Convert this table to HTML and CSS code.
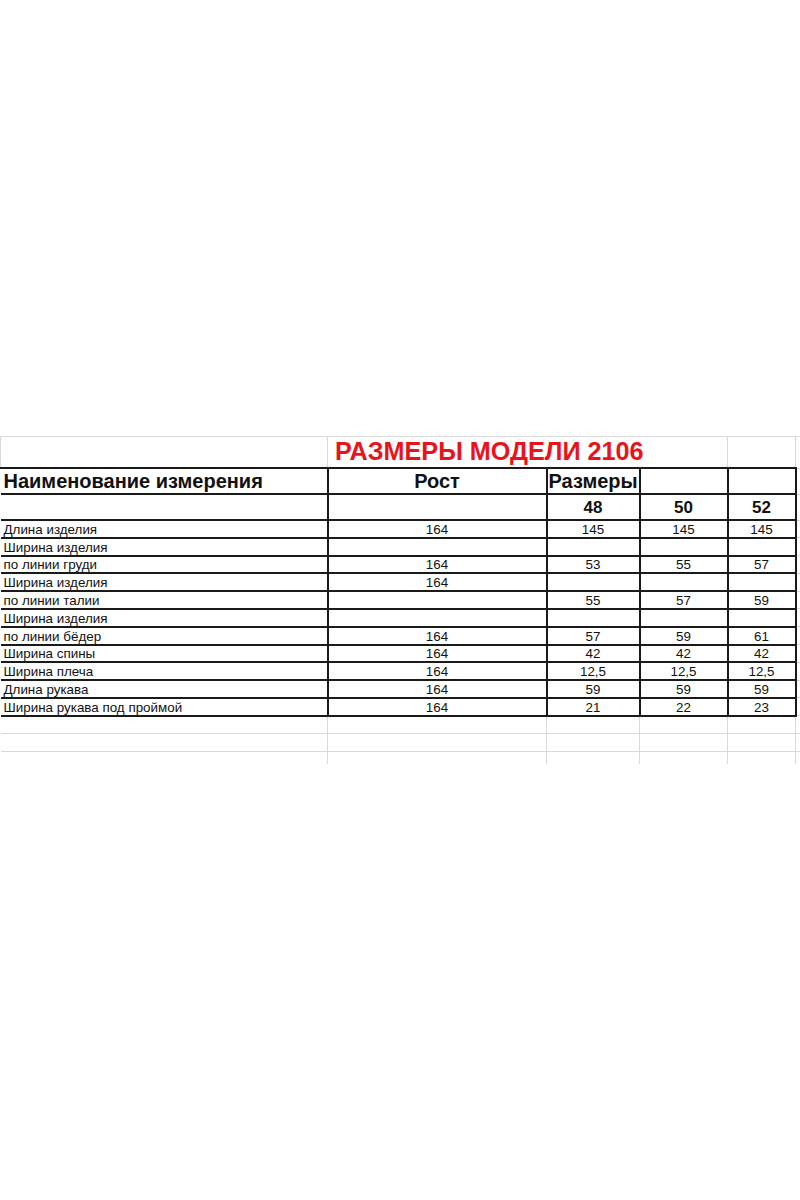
FILE: index.html
```html
<!DOCTYPE html>
<html lang="ru">
<head>
<meta charset="utf-8">
<title>Размеры модели 2106</title>
<link rel="stylesheet" href="styles.css">
</head>
<body>
<div class="sheet">
<table class="grid">
  <colgroup>
    <col class="c-name">
    <col class="c-rost">
    <col class="c-s1">
    <col class="c-s2">
    <col class="c-s3">
    <col class="c-rest">
  </colgroup>
  <tr class="r-title">
    <td class="g"></td>
    <td class="g title" colspan="3">РАЗМЕРЫ МОДЕЛИ 2106</td>
    <td class="g"></td>
    <td class="g"></td>
  </tr>
  <tr class="r-head">
    <td class="b first head-name">Наименование измерения</td>
    <td class="b head-c">Рост</td>
    <td class="b head-l">Размеры</td>
    <td class="b"></td>
    <td class="b"></td>
    <td class="g"></td>
  </tr>
  <tr class="r-head">
    <td class="b first"></td>
    <td class="b"></td>
    <td class="b size">48</td>
    <td class="b size">50</td>
    <td class="b size">52</td>
    <td class="g"></td>
  </tr>
  <tr class="r-data"><td class="b first name">Длина изделия</td><td class="b num">164</td><td class="b num">145</td><td class="b num">145</td><td class="b num">145</td><td class="g"></td></tr>
  <tr class="r-data"><td class="b first name">Ширина изделия</td><td class="b num"></td><td class="b num"></td><td class="b num"></td><td class="b num"></td><td class="g"></td></tr>
  <tr class="r-data"><td class="b first name">по линии груди</td><td class="b num">164</td><td class="b num">53</td><td class="b num">55</td><td class="b num">57</td><td class="g"></td></tr>
  <tr class="r-data"><td class="b first name">Ширина изделия</td><td class="b num">164</td><td class="b num"></td><td class="b num"></td><td class="b num"></td><td class="g"></td></tr>
  <tr class="r-data"><td class="b first name">по линии талии</td><td class="b num"></td><td class="b num">55</td><td class="b num">57</td><td class="b num">59</td><td class="g"></td></tr>
  <tr class="r-data"><td class="b first name">Ширина изделия</td><td class="b num"></td><td class="b num"></td><td class="b num"></td><td class="b num"></td><td class="g"></td></tr>
  <tr class="r-data"><td class="b first name">по линии бёдер</td><td class="b num">164</td><td class="b num">57</td><td class="b num">59</td><td class="b num">61</td><td class="g"></td></tr>
  <tr class="r-data"><td class="b first name">Ширина спины</td><td class="b num">164</td><td class="b num">42</td><td class="b num">42</td><td class="b num">42</td><td class="g"></td></tr>
  <tr class="r-data"><td class="b first name">Ширина плеча</td><td class="b num">164</td><td class="b num">12,5</td><td class="b num">12,5</td><td class="b num">12,5</td><td class="g"></td></tr>
  <tr class="r-data"><td class="b first name">Длина рукава</td><td class="b num">164</td><td class="b num">59</td><td class="b num">59</td><td class="b num">59</td><td class="g"></td></tr>
  <tr class="r-data"><td class="b first name">Ширина рукава под проймой</td><td class="b num">164</td><td class="b num">21</td><td class="b num">22</td><td class="b num">23</td><td class="g"></td></tr>
  <tr class="r-data"><td class="g first"></td><td class="g"></td><td class="g"></td><td class="g"></td><td class="g"></td><td class="g"></td></tr>
  <tr class="r-data"><td class="g first"></td><td class="g"></td><td class="g"></td><td class="g"></td><td class="g"></td><td class="g"></td></tr>
  <tr class="r-last"><td class="g first"></td><td class="g"></td><td class="g"></td><td class="g"></td><td class="g"></td><td class="g"></td></tr>
</table>
</div>
</body>
</html>
```

FILE: styles.css
```css
html, body {
  margin: 0;
  padding: 0;
  background: #ffffff;
}

body {
  font-family: "Liberation Sans", Arial, sans-serif;
  color: #111111;
  width: 800px;
  height: 1200px;
  overflow: hidden;
}

.sheet {
  padding-top: 436px;
}

.grid {
  border-collapse: collapse;
  table-layout: fixed;
  width: 800px;
}

.c-name { width: 327px; }
.c-rost { width: 219px; }
.c-s1 { width: 93px; }
.c-s2 { width: 88px; }
.c-s3 { width: 68px; }
.c-rest { width: 5px; }

.grid td {
  padding: 0;
  white-space: nowrap;
  overflow: visible;
  vertical-align: bottom;
}

.grid td.g {
  border: 1px solid #d9d9d9;
}

.grid td.b {
  border: 2px solid #1a1a1a;
}

.grid td.first {
  border-left: none;
}

.r-title { height: 31px; }
.r-head { height: 26px; }
.r-data { height: 17.8px; }
.r-last { height: 13px; }

.r-last td {
  border-bottom: none !important;
}

.r-last td.g:last-child,
.r-title td.g:last-child {
  border-right: none;
}

.title {
  color: #e8141a;
  font-weight: bold;
  font-size: 25.2px;
  line-height: 28px;
  padding-left: 7px !important;
  padding-bottom: 2px !important;
}

.head-name {
  font-weight: bold;
  font-size: 20px;
  line-height: 22px;
  padding-left: 3px !important;
  padding-bottom: 1px !important;
}

.head-c {
  font-weight: bold;
  font-size: 20px;
  line-height: 22px;
  text-align: center;
  padding-bottom: 1px !important;
}

.head-l {
  font-weight: bold;
  font-size: 20px;
  line-height: 22px;
  padding-left: 1px !important;
  padding-bottom: 1px !important;
}

.size {
  font-weight: bold;
  font-size: 17px;
  line-height: 20px;
  text-align: center;
  padding-bottom: 1px !important;
}

.name {
  font-size: 13.4px;
  line-height: 15px;
  padding-left: 3px !important;
}

.num {
  font-size: 13.4px;
  line-height: 15px;
  text-align: center;
}
```
